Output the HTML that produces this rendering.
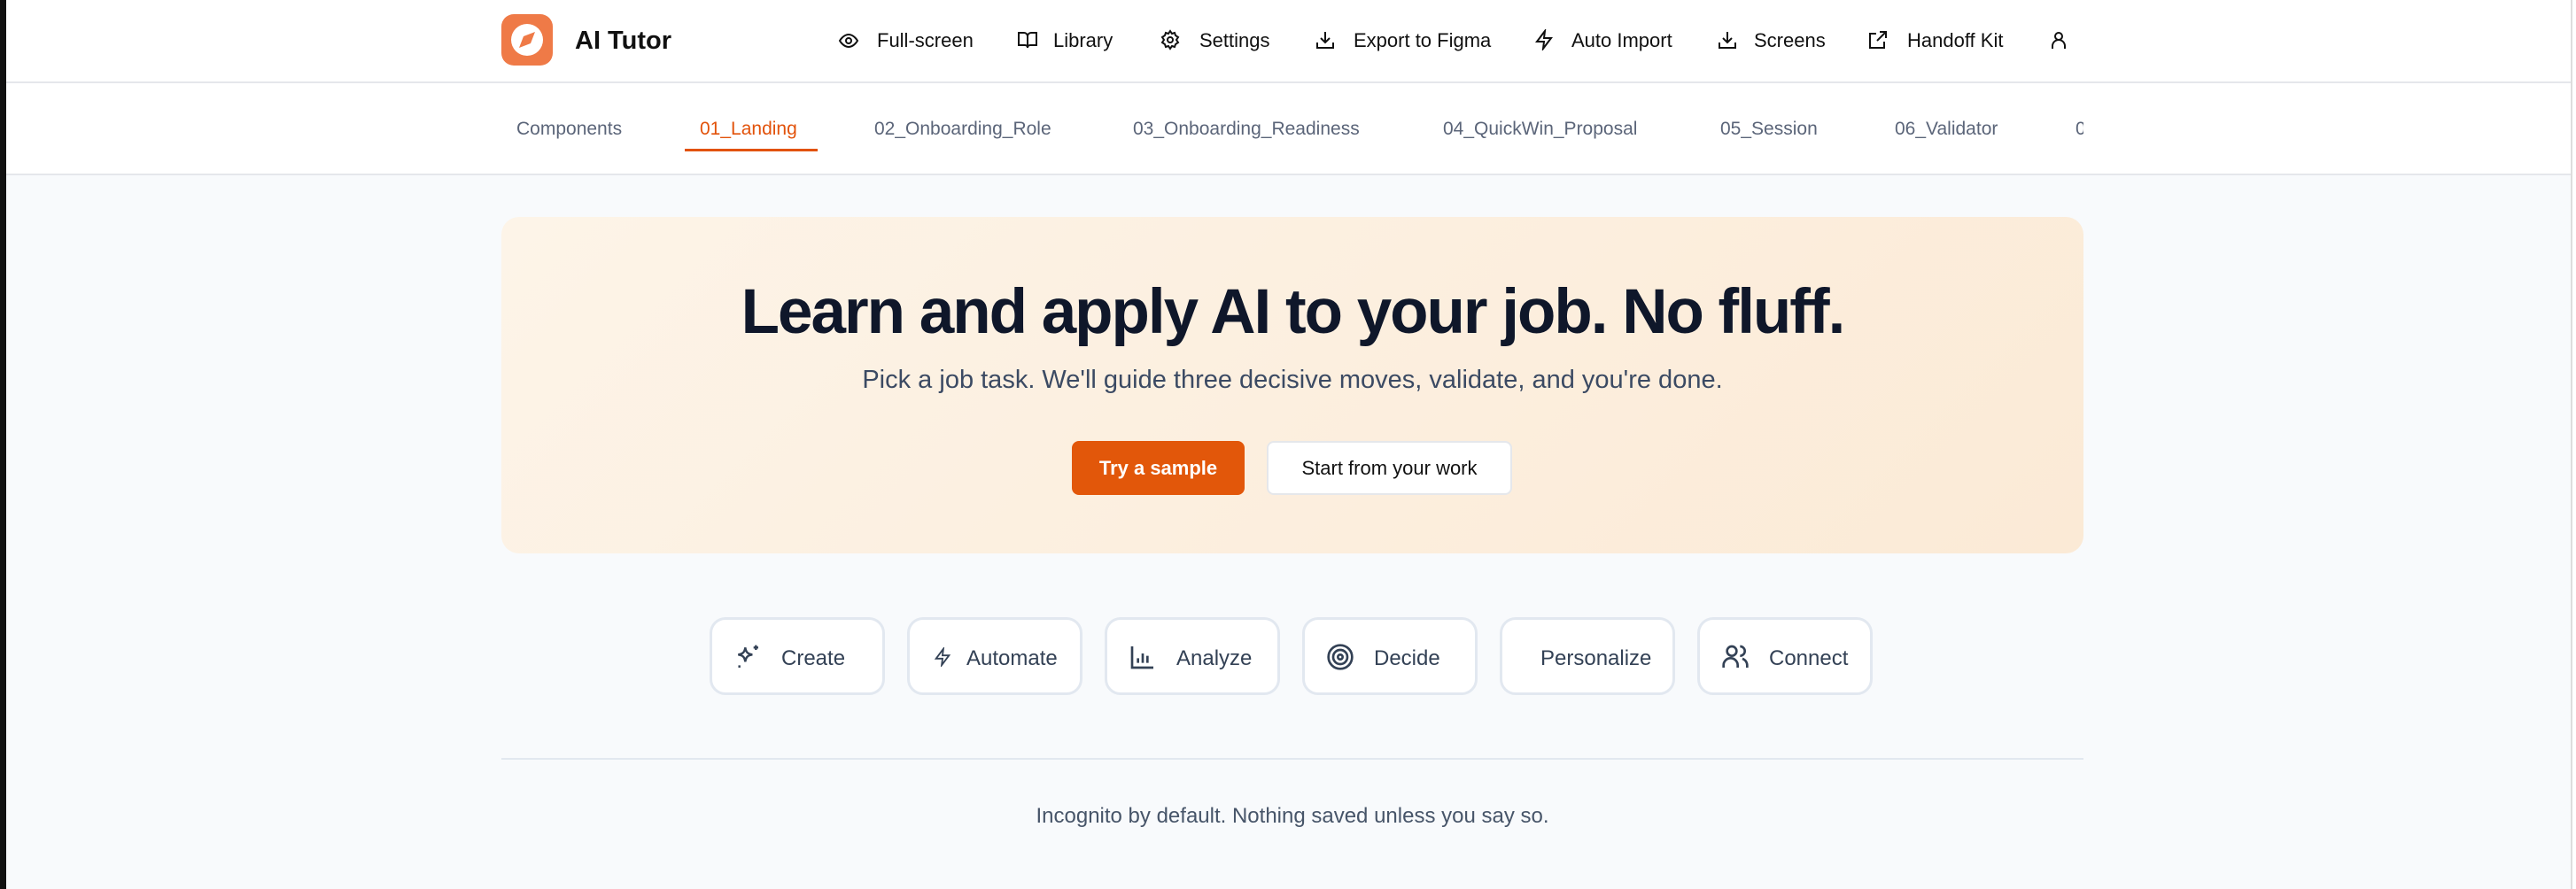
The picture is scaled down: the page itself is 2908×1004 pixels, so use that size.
<!DOCTYPE html>
<html><head><meta charset="utf-8"><style>
*{margin:0;padding:0;box-sizing:border-box}
body{width:2908px;height:1004px;background:#f8fafc;font-family:"Liberation Sans",sans-serif;position:relative;overflow:hidden}
.edgeL{position:absolute;left:0;top:0;width:7px;height:1004px;background:#111}
.edgeR{position:absolute;right:0;top:0;width:6px;height:1004px;background:#fff;border-left:2px solid #ddd}
.hdr{position:absolute;left:7px;right:6px;top:0;height:94px;background:#fff;border-bottom:2px solid #e5e7eb}
.tabs{position:absolute;left:7px;right:6px;top:94px;height:104px;background:#fff;border-bottom:2px solid #e5e7eb}
.abs{position:absolute;white-space:nowrap}
.nav{font-size:22px;color:#111;top:33px}
.tab{font-size:21px;color:#5b6579;top:134px}
svg{position:absolute}
.hero{position:absolute;left:566px;top:245px;width:1786px;height:380px;border-radius:20px;background:linear-gradient(135deg,#fdf4e8,#fbead6)}
.pill{position:absolute;top:697px;width:198px;height:88px;border:3px solid #e2e8f0;border-radius:18px;background:#fff;font-size:24px;color:#334155}
.pill span{position:absolute;top:30px}
</style></head><body>
<div class="edgeL"></div><div class="edgeR"></div>
<div class="hdr"></div><div class="tabs"></div>
<svg style="left:566px;top:16px" width="58" height="58" viewBox="0 0 58 58"><rect width="58" height="58" rx="14" fill="#ef7a47"/><circle cx="29" cy="29" r="18" fill="#fff"/><path d="M38 20 L33 33 L20 38 L25 25 Z" fill="#ef7a47"/></svg>
<div class="abs" style="left:649px;top:30px;font-size:29px;font-weight:bold;color:#111">AI Tutor</div>

<svg style="left:946px;top:34px" width="24" height="24" viewBox="0 0 24 24" fill="none" stroke="#111" stroke-width="2"><path d="M2 12s4-7 10-7 10 7 10 7-4 7-10 7S2 12 2 12z"/><circle cx="12" cy="12" r="3"/></svg>
<div class="abs nav" style="left:990px">Full-screen</div>
<svg style="left:1148px;top:33px" width="24" height="24" viewBox="0 0 24 24" fill="none" stroke="#111" stroke-width="2"><path d="M2 4h6a4 4 0 0 1 4 4v13a3 3 0 0 0-3-3H2zM22 4h-6a4 4 0 0 0-4 4v13a3 3 0 0 1 3-3h7z"/></svg>
<div class="abs nav" style="left:1189px">Library</div>
<svg style="left:1309px;top:33px" width="24" height="24" viewBox="0 0 24 24" fill="none" stroke="#111" stroke-width="2"><circle cx="12" cy="12" r="3"/><path d="M12 2l2 3 3-1 1 3 3 2-2 3 2 3-3 2-1 3-3-1-2 3-2-3-3 1-1-3-3-2 2-3-2-3 3-2 1-3 3 1z"/></svg>
<div class="abs nav" style="left:1354px">Settings</div>
<svg style="left:1484px;top:33px" width="24" height="24" viewBox="0 0 24 24" fill="none" stroke="#111" stroke-width="2"><path d="M12 3v12M7 10l5 5 5-5M3 15v6h18v-6"/></svg>
<div class="abs nav" style="left:1528px">Export to Figma</div>
<svg style="left:1731px;top:33px" width="24" height="24" viewBox="0 0 24 24" fill="none" stroke="#111" stroke-width="2"><path d="M13 2L4 14h8l-1 8 9-12h-8z"/></svg>
<div class="abs nav" style="left:1774px">Auto Import</div>
<svg style="left:1938px;top:33px" width="24" height="24" viewBox="0 0 24 24" fill="none" stroke="#111" stroke-width="2"><path d="M12 3v12M7 10l5 5 5-5M3 15v6h18v-6"/></svg>
<div class="abs nav" style="left:1980px">Screens</div>
<svg style="left:2108px;top:33px" width="24" height="24" viewBox="0 0 24 24" fill="none" stroke="#111" stroke-width="2"><path d="M14 3h7v7M21 3l-10 10M19 14v7H3V5h7"/></svg>
<div class="abs nav" style="left:2153px">Handoff Kit</div>
<svg style="left:2312px;top:33px" width="24" height="24" viewBox="0 0 24 24" fill="none" stroke="#111" stroke-width="2"><circle cx="12" cy="8" r="4"/><path d="M5 22v-3a7 7 0 0 1 14 0v3"/></svg>

<div class="abs tab" style="left:583px">Components</div>
<div class="abs tab" style="left:790px;color:#e2520a">01_Landing</div>
<div style="position:absolute;left:773px;top:168px;width:150px;height:3px;background:#e2520a"></div>
<div class="abs tab" style="left:987px">02_Onboarding_Role</div>
<div class="abs tab" style="left:1279px">03_Onboarding_Readiness</div>
<div class="abs tab" style="left:1629px">04_QuickWin_Proposal</div>
<div class="abs tab" style="left:1942px">05_Session</div>
<div class="abs tab" style="left:2139px">06_Validator</div>
<div class="abs tab" style="left:2343px">0</div>
<div style="position:absolute;left:2352px;top:96px;width:548px;height:100px;background:#fff"></div>

<div class="hero"></div>
<div class="abs" style="left:566px;width:1786px;top:312px;text-align:center;font-size:71px;font-weight:bold;color:#0f172a;letter-spacing:-2px">Learn and apply AI to your job. No fluff.</div>
<div class="abs" style="left:566px;width:1786px;top:413px;text-align:center;font-size:29px;color:#3b4a63">Pick a job task. We'll guide three decisive moves, validate, and you're done.</div>
<div class="abs" style="left:1210px;top:498px;width:195px;height:61px;background:#e2570a;border-radius:8px;color:#fff;font-size:22px;font-weight:bold;text-align:center;line-height:61px">Try a sample</div>
<div class="abs" style="left:1430px;top:498px;width:277px;height:61px;background:#fff;border:2px solid #e5e7eb;border-radius:8px;color:#111;font-size:22px;text-align:center;line-height:57px">Start from your work</div>

<div class="pill" style="left:801px"><svg style="left:24px;top:26px" width="32" height="32" viewBox="0 0 24 24" fill="none" stroke="#334155" stroke-width="1.8"><path d="M10 4c.6 4 2 5.4 6 6-4 .6-5.4 2-6 6-.6-4-2-5.4-6-6 4-.6 5.4-2 6-6zM19 2v4M17 4h4M5 19v2"/></svg><span style="left:78px">Create</span></div>
<div class="pill" style="left:1024px"><svg style="left:26px;top:31px" width="22" height="22" viewBox="0 0 24 24" fill="none" stroke="#334155" stroke-width="2"><path d="M13 2L4 14h8l-1 8 9-12h-8z"/></svg><span style="left:64px">Automate</span></div>
<div class="pill" style="left:1247px"><svg style="left:24px;top:26px" width="32" height="32" viewBox="0 0 24 24" fill="none" stroke="#334155" stroke-width="2"><path d="M3 3v18h18M8 17v-4M12 17V9M16 17v-6"/></svg><span style="left:78px">Analyze</span></div>
<div class="pill" style="left:1470px"><svg style="left:24px;top:26px" width="32" height="32" viewBox="0 0 24 24" fill="none" stroke="#334155" stroke-width="2"><circle cx="12" cy="12" r="10"/><circle cx="12" cy="12" r="6"/><circle cx="12" cy="12" r="2"/></svg><span style="left:78px">Decide</span></div>
<div class="pill" style="left:1693px"><span style="left:43px">Personalize</span></div>
<div class="pill" style="left:1916px"><svg style="left:24px;top:26px" width="32" height="32" viewBox="0 0 24 24" fill="none" stroke="#334155" stroke-width="2"><circle cx="9" cy="7" r="4"/><path d="M2 21v-2a6 6 0 0 1 12 0v2M16 3a4 4 0 0 1 0 8M22 21v-2a6 6 0 0 0-4-5.6"/></svg><span style="left:78px">Connect</span></div>

<div style="position:absolute;left:566px;top:856px;width:1786px;height:2px;background:#e2e8f0"></div>
<div class="abs" style="left:566px;width:1786px;top:908px;text-align:center;font-size:24px;color:#475569">Incognito by default. Nothing saved unless you say so.</div>
</body></html>
